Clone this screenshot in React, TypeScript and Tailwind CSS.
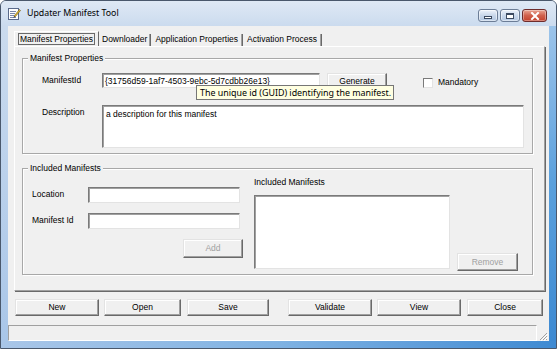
import React from "react";

const F = "font-['Liberation_Sans',Arial,sans-serif]";

function Btn({ label, cls, disabled }: { label: string; cls: string; disabled?: boolean }) {
  return (
    <div
      className={`flex items-center justify-center bg-[#f0f0f0] border border-t-[#e3e3e3] border-l-[#e3e3e3] border-r-[#696969] border-b-[#696969] shadow-[inset_-1px_-1px_0_#a0a0a0,inset_1px_1px_0_#ffffff] text-[8.5px] leading-none ${
        disabled ? "text-[#a0a0a0]" : "text-black"
      } ${cls}`}
    >
      {label}
    </div>
  );
}

function Box({ cls, children }: { cls: string; children?: React.ReactNode }) {
  return (
    <div
      className={`bg-white border border-t-[#7a7a7a] border-l-[#7a7a7a] border-r-[#e3e3e3] border-b-[#e3e3e3] shadow-[inset_1px_1px_0_#a0a0a0] text-[8.5px] leading-none text-black ${cls}`}
    >
      {children}
    </div>
  );
}

function Group({ title, cls, children }: { title: string; cls: string; children?: React.ReactNode }) {
  return (
    <div className={`relative border border-[#a8a8a8] shadow-[1px_1px_0_#ffffff,inset_1px_1px_0_#ffffff] ${cls}`}>
      <span className="absolute -top-[6px] left-[5px] bg-[#f0f0f0] px-[2px] text-[8.5px] leading-[10px] text-black">
        {title}
      </span>
      {children}
    </div>
  );
}

function CaptionBtn({ kind }: { kind: "min" | "max" | "close" }) {
  if (kind === "close") {
    return (
      <div className="w-[25px] h-[13px] rounded-[3px] border border-[#6e2c2c] bg-gradient-to-b from-[#e8a493] via-[#d0604c] to-[#c4402a] flex items-center justify-center shadow-[inset_0_0_0_1px_rgba(255,255,255,0.35)]">
        <svg width="10" height="8" viewBox="0 0 10 8">
          <path d="M2 1 L8 7 M8 1 L2 7" stroke="#ffffff" strokeWidth="2" strokeLinecap="square" />
        </svg>
      </div>
    );
  }
  return (
    <div className="w-[20px] h-[13px] rounded-[3px] border border-[#6c7d96] bg-gradient-to-b from-[#eef3fa] via-[#c9d7ea] to-[#b3c7e1] flex items-center justify-center shadow-[inset_0_0_0_1px_rgba(255,255,255,0.5)]">
      {kind === "min" ? (
        <div className="w-[8px] h-[3px] mt-[4px] bg-white border border-[#3c4a60]" />
      ) : (
        <div className="w-[8px] h-[6px] bg-white border border-[#3c4a60] border-t-2" />
      )}
    </div>
  );
}

export default function App() {
  return (
    <div className={`w-[558px] h-[349px] bg-white relative ${F}`}>
      <div className="w-[557px] h-[349px] border border-[#4a586c] rounded-t-[6px] overflow-hidden flex flex-col bg-[#c9d9ee]">
        {/* title bar */}
        <div className="h-[25px] flex items-start bg-gradient-to-b from-[#dfe9f5] to-[#cbdbee] shrink-0">
          <div className="mt-[6px] ml-[7px] w-[13px] h-[13px]">
            <svg width="13" height="13" viewBox="0 0 13 13">
              <rect x="0.5" y="1.5" width="10" height="11" fill="#ffffff" stroke="#5a6a8a" />
              <path d="M2 4.5 H8 M2 6.5 H7 M2 8.5 H6 M2 10.5 H8" stroke="#7a88a8" strokeWidth="1" />
              <path d="M6 9 L11.5 2.5 L12.5 3.5 L7 10 Z" fill="#e8c030" stroke="#6a5010" strokeWidth="0.6" />
              <path d="M6 9 L5.5 10.8 L7 10 Z" fill="#333" />
            </svg>
          </div>
          <span className="ml-[6px] mt-[6px] text-[8.8px] leading-[13px] text-black font-['Noto_Sans',sans-serif]">
            Updater Manifest Tool
          </span>
          <div className="ml-auto mr-[9px] mt-[8px] flex gap-[2px]">
            <CaptionBtn kind="min" />
            <CaptionBtn kind="max" />
            <CaptionBtn kind="close" />
          </div>
        </div>

        {/* middle */}
        <div className="flex flex-1">
          <div className="w-[7px] bg-gradient-to-b from-[#cbdbee] to-[#a9c6e8]" />
          {/* client */}
          <div className="w-[541px] h-[315px] bg-[#f0f0f0] flex flex-col">
            {/* tabs */}
            <div className="h-[20px] pt-[5px] pl-[6px] flex items-end text-[8.5px] leading-none text-black">
              <div className="h-[15px] w-[85px] border border-t-white border-l-white border-r-[#696969] border-b-0 flex items-center justify-center bg-[#f0f0f0]">
                <span className="border border-[#6a6a6a] px-[1px] py-[1px]">Manifest Properties</span>
              </div>
              <div className="h-[13px] flex items-center">
                <span className="px-[3px]">Downloader</span>
                <div className="w-[1px] h-[12px] bg-[#696969] shadow-[-1px_0_0_#a0a0a0]" />
                <span className="px-[4px]">Application Properties</span>
                <div className="w-[1px] h-[12px] bg-[#696969] shadow-[-1px_0_0_#a0a0a0]" />
                <span className="px-[4px]">Activation Process</span>
                <div className="w-[1px] h-[12px] bg-[#696969] shadow-[-1px_0_0_#a0a0a0]" />
              </div>
            </div>

            {/* tab page */}
            <div className="ml-[6px] w-[531px] h-[245px] border border-t-white border-l-white border-r-[#a0a0a0] border-b-[#a0a0a0] shadow-[1px_1px_0_#696969] flex flex-col items-start">
              <Group title="Manifest Properties" cls="mt-[11px] ml-[7px] w-[511px] h-[96px]">
                <div className="flex items-start pl-[19px] pt-[14px]">
                  <span className="w-[60px] pt-[3px] text-[8.5px] leading-none">ManifestId</span>
                  <Box cls="w-[218px] h-[15px] pl-[2px] pt-[3px]">{"{31756d59-1af7-4503-9ebc-5d7cdbb26e13}"}</Box>
                  <Btn label="Generate" cls="ml-[7px] w-[60px] h-[18px] items-start pt-[3px]" />
                  <div className="ml-[36px] mt-[5px] w-[10px] h-[10px] bg-white border border-t-[#7a7a7a] border-l-[#7a7a7a] border-r-[#e3e3e3] border-b-[#e3e3e3]" />
                  <span className="ml-[5px] mt-[5px] text-[8.5px] leading-none">Mandatory</span>
                </div>
                <div className="flex items-start pl-[19px] mt-[14px]">
                  <span className="w-[60px] pt-[3px] text-[8.5px] leading-none">Description</span>
                  <Box cls="w-[422px] h-[43px] pl-[3px] pt-[4px]">a description for this manifest</Box>
                </div>
              </Group>

              <Group title="Included Manifests" cls="mt-[14px] ml-[7px] w-[511px] h-[107px]">
                <div className="flex items-start">
                  <div className="w-[231px] pl-[9px] pt-[18px] flex flex-col">
                    <div className="flex items-start">
                      <span className="w-[56px] pt-[3px] text-[8.5px] leading-none">Location</span>
                      <Box cls="w-[152px] h-[16px]" />
                    </div>
                    <div className="flex items-start mt-[10px]">
                      <span className="w-[56px] pt-[3px] text-[8.5px] leading-none">Manifest Id</span>
                      <Box cls="w-[152px] h-[16px]" />
                    </div>
                    <Btn label="Add" disabled cls="mt-[10px] ml-[151px] w-[60px] h-[19px]" />
                  </div>
                  <div className="flex flex-col">
                    <span className="mt-[8px] text-[8.5px] leading-[10px]">Included Manifests</span>
                    <div className="flex items-start mt-[8px]">
                      <Box cls="w-[196px] h-[74px]" />
                      <Btn label="Remove" disabled cls="ml-[7px] mt-[58px] w-[61px] h-[18px]" />
                    </div>
                  </div>
                </div>
              </Group>
            </div>

            {/* bottom buttons */}
            <div className="flex mt-[8px] pl-[7px] h-[17px]">
              <Btn label="New" cls="w-[84px] h-[17px]" />
              <Btn label="Open" cls="ml-[5px] w-[77px] h-[17px]" />
              <Btn label="Save" cls="ml-[6px] w-[82px] h-[17px]" />
              <Btn label="Validate" cls="ml-[19px] w-[84px] h-[17px]" />
              <Btn label="View" cls="ml-[5px] w-[84px] h-[17px]" />
              <Btn label="Close" cls="ml-[6px] w-[76px] h-[17px]" />
            </div>

            {/* status bar */}
            <div className="mt-[9px] flex items-end h-[16px]">
              <div className="w-[529px] h-[16px] border border-t-[#a0a0a0] border-l-[#a0a0a0] border-r-white border-b-white" />
              <div className="ml-auto w-[10px] h-[10px] mr-[1px]">
                <svg width="10" height="10" viewBox="0 0 10 10">
                  <path d="M9 2 L2 9 M9 5 L5 9 M9 8 L8 9" stroke="#a0a0a0" strokeWidth="1" />
                  <path d="M10 3 L3 10 M10 6 L6 10" stroke="#ffffff" strokeWidth="1" />
                </svg>
              </div>
            </div>
          </div>
          <div className="w-[7px] bg-gradient-to-b from-[#9cc4ea] via-[#5aa0dc] to-[#3e8ad2]" />
        </div>
        {/* bottom frame */}
        <div className="h-[7px] bg-gradient-to-r from-[#a9c6e8] via-[#7fb2e3] to-[#3e8ad2]" />
      </div>

      {/* tooltip */}
      <div className="absolute left-[196px] top-[85px] w-[198px] h-[15px] bg-[#ffffe1] border border-[#767676] text-[8.9px] leading-[13px] text-black pl-[3px] font-['Noto_Sans',sans-serif] whitespace-nowrap">
        The unique id (GUID) identifying the manifest.
      </div>
    </div>
  );
}
